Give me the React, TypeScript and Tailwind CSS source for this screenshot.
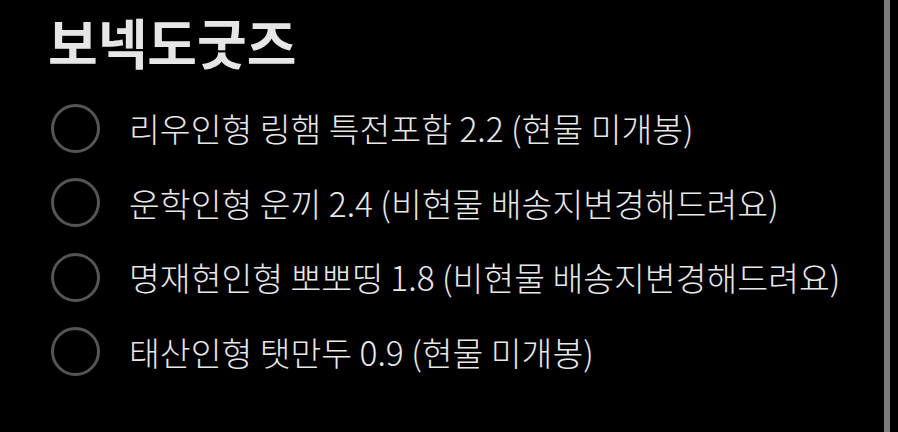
import React from 'react';

const items = [
  '리우인형 링햄 특전포함 2.2 (현물 미개봉)',
  '운학인형 운끼 2.4 (비현물 배송지변경해드려요)',
  '명재현인형 뽀뽀띵 1.8 (비현물 배송지변경해드려요)',
  '태산인형 탯만두 0.9 (현물 미개봉)',
];

export default function App() {
  return (
    <div
      className="relative w-[898px] h-[432px] bg-black overflow-hidden"
      style={{ fontFamily: '"Noto Sans CJK KR", "Noto Sans", sans-serif' }}
    >
      <div className="pl-[48px] pt-[6px]">
        <h1 className="text-[54px] leading-[72px] font-bold text-[#e6e6e6]">보넥도굿즈</h1>
        <ul className="mt-[13px] flex flex-col">
          {items.map((item) => (
            <li key={item} className="flex items-center h-[74.5px]">
              <span className="w-[49px] h-[49px] ml-[3px] rounded-full border-[3px] border-[#555555] shrink-0" />
              <span className="ml-[29px] text-[33.5px] font-light text-[#e8e8e8] whitespace-nowrap">{item}</span>
            </li>
          ))}
        </ul>
      </div>
      <div className="absolute top-0 right-[8px] w-[6px] h-full bg-[#7c7c7c]" />
    </div>
  );
}
